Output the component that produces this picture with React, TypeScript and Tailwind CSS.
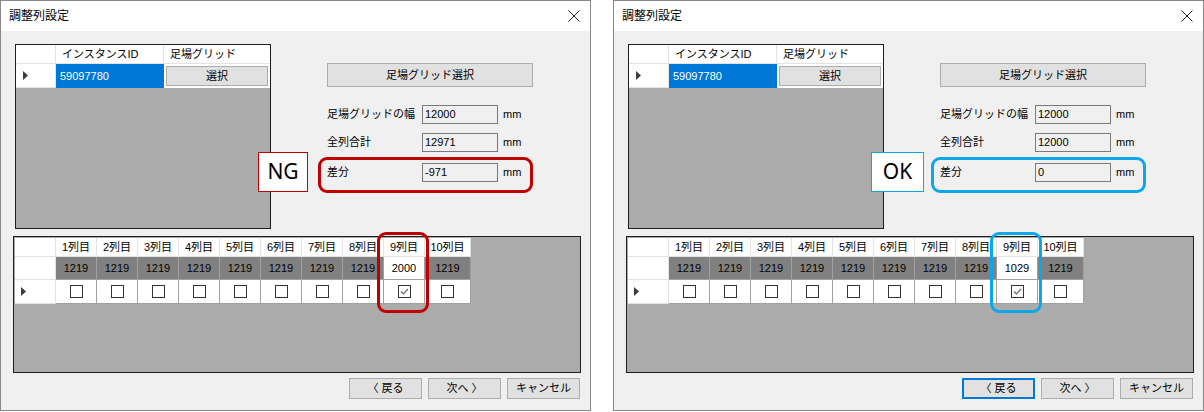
import React from "react";

type DialogProps = {
  ok: boolean;
  total: string;
  diff: string;
  col9: string;
};

const columns = ["1列目", "2列目", "3列目", "4列目", "5列目", "6列目", "7列目", "8列目", "9列目", "10列目"];

function RowArrow() {
  return (
    <svg width="5" height="9" viewBox="0 0 5 9">
      <path d="M0 0 L5 4.5 L0 9 Z" fill="#3c3c3c" />
    </svg>
  );
}

function CheckBox({ checked }: { checked: boolean }) {
  return (
    <div className="w-[13px] h-[13px] border border-[#333333] bg-white flex items-center justify-center">
      {checked && (
        <svg width="11" height="11" viewBox="0 0 11 11">
          <path d="M2 5.5 L4.5 8 L9 3" stroke="#6a6a6a" strokeWidth="1.2" fill="none" />
        </svg>
      )}
    </div>
  );
}

function ValueRow({ label, value, className }: { label: string; value: string; className: string }) {
  return (
    <div className={"flex items-center h-[19px] " + className}>
      <div className="w-[95px] text-[11px] text-black">{label}</div>
      <div className="w-[76px] h-[19px] border border-[#7a7a7a] bg-[#f0f0f0] pl-[2px] text-[11px] leading-[17px] text-black">
        {value}
      </div>
      <div className="ml-[5px] text-[11px] text-black">mm</div>
    </div>
  );
}

function Dialog({ ok, total, diff, col9 }: DialogProps) {
  const accent = ok ? "border-[#0aa8e8]" : "border-[#c00000]";

  return (
    <div className="relative w-[591px] h-[411px] border border-[#888888] bg-[#f0f0f0] flex flex-col">
      {/* title bar */}
      <div className="h-[30px] bg-white flex items-center justify-between pl-[8px] pr-[10px]">
        <span className="text-[12px] text-black">調整列設定</span>
        <svg width="12" height="12" viewBox="0 0 12 12">
          <path d="M0.5 0.5 L11.5 11.5 M11.5 0.5 L0.5 11.5" stroke="#222" strokeWidth="1" />
        </svg>
      </div>

      <div className="flex mt-[13px]">
        {/* upper grid */}
        <div className="ml-[14px] w-[256px] h-[185px] border border-[#1e1e1e] bg-[#ababab] flex flex-col">
          <div className="flex h-[19px] bg-white border-b border-[#e3e3e3] text-[11px] leading-[18px] text-black">
            <div className="w-[40px] border-r border-[#e3e3e3]" />
            <div className="w-[108px] border-r border-[#e3e3e3] pl-[6px]">インスタンスID</div>
            <div className="flex-1 pl-[6px]">足場グリッド</div>
          </div>
          <div className="flex h-[24px]">
            <div className="w-[40px] bg-white border-r border-b border-[#e3e3e3] flex items-center pl-[7px]">
              <RowArrow />
            </div>
            <div className="w-[108px] bg-[#0078d7] text-white text-[11px] leading-[24px] pl-[4px]">59097780</div>
            <div className="flex-1 bg-white p-[2px]">
              <div className="h-full border border-[#adadad] bg-[#e1e1e1] flex items-center justify-center text-[11px] text-black">
                選択
              </div>
            </div>
          </div>
        </div>

        {/* right panel */}
        <div className="ml-[56px] pt-[19px] flex flex-col">
          <div className="w-[206px] h-[24px] border border-[#adadad] bg-[#e1e1e1] flex items-center justify-center text-[11px] text-black">
            足場グリッド選択
          </div>
          <ValueRow label="足場グリッドの幅" value="12000" className="mt-[18px]" />
          <ValueRow label="全列合計" value={total} className="mt-[9px]" />
          <ValueRow label="差分" value={diff} className="mt-[11px]" />
        </div>
      </div>

      {/* lower grid */}
      <div className="ml-[12px] mt-[7px] w-[568px] h-[137px] border border-[#1e1e1e] bg-[#ababab] pt-px pl-px">
        <div className="flex h-[19px] text-[11px] leading-[18px] text-black">
          <div className="w-[41px] bg-white border-r border-b border-[#e3e3e3]" />
          {columns.map((c, i) => (
            <div
              key={c}
              className={
                (i === 9 ? "w-[46px]" : "w-[41px]") +
                " bg-white border-r border-b border-[#e3e3e3] text-center"
              }
            >
              {c}
            </div>
          ))}
        </div>
        <div className="flex h-[23px] text-[11px] leading-[22px] text-black">
          <div className="w-[41px] bg-white border-r border-b border-[#e3e3e3]" />
          {columns.map((c, i) => (
            <div
              key={c}
              className={
                (i === 9 ? "w-[46px]" : "w-[41px]") +
                (i === 8 ? " bg-white" : " bg-[#808080]") +
                " border-r border-b border-[#a0a0a0] text-center"
              }
            >
              {i === 8 ? col9 : "1219"}
            </div>
          ))}
        </div>
        <div className="flex h-[24px]">
          <div className="w-[41px] bg-white border-r border-b border-[#e3e3e3] flex items-center pl-[6px]">
            <RowArrow />
          </div>
          {columns.map((c, i) => (
            <div
              key={c}
              className={
                (i === 9 ? "w-[46px]" : "w-[41px]") +
                " bg-white border-r border-b border-[#a0a0a0] flex items-center justify-center"
              }
            >
              <CheckBox checked={i === 8} />
            </div>
          ))}
        </div>
      </div>

      {/* buttons */}
      <div className="flex justify-end gap-[6px] pr-[10px] mt-[5px]">
        <div
          className={
            "w-[73px] h-[21px] bg-[#e1e1e1] flex items-center justify-center text-[11px] text-black " +
            (ok ? "border-2 border-[#0078d7]" : "border border-[#adadad]")
          }
        >
          〈 戻る
        </div>
        <div className="w-[73px] h-[21px] border border-[#adadad] bg-[#e1e1e1] flex items-center justify-center text-[11px] text-black">
          次へ 〉
        </div>
        <div className="w-[73px] h-[21px] border border-[#adadad] bg-[#e1e1e1] flex items-center justify-center text-[11px] text-black">
          キャンセル
        </div>
      </div>

      {/* annotations */}
      <div
        className={
          "absolute left-[257px] top-[151px] h-[40px] border bg-white flex items-center justify-center text-[21px] text-black font-['Noto_Sans',sans-serif] " +
          (ok ? "w-[53px] " : "w-[50px] ") +
          accent
        }
      >
        {ok ? "OK" : "NG"}
      </div>
      <div className={"absolute left-[317px] top-[156px] w-[215px] h-[36px] border-[3px] rounded-[9px] " + accent} />
      <div className={"absolute left-[376px] top-[231px] w-[52px] h-[81px] border-[3px] rounded-[9px] " + accent} />
    </div>
  );
}

export default function App() {
  return (
    <div className="w-[1204px] h-[412px] bg-white flex gap-[22px] font-['Liberation_Sans','Noto_Sans_CJK_JP',sans-serif]">
      <Dialog ok={false} total="12971" diff="-971" col9="2000" />
      <Dialog ok={true} total="12000" diff="0" col9="1029" />
    </div>
  );
}
